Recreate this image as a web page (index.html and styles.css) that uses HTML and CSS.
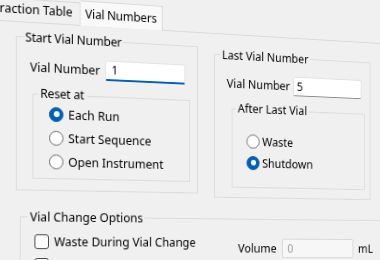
FILE: index.html
```html
<!DOCTYPE html>
<html lang="en">
<head>
    <meta charset="UTF-8">
    <meta name="viewport" content="width=device-width, initial-scale=1.0">
    <title>Vial Numbers</title>

    <link rel="stylesheet" href="styles.css">
</head>
<body>
  <div class="dialog">
    <div class="tabs">
      <div class="tab">Fraction Table</div>
      <div class="tab active">Vial Numbers</div>
    </div>

    <div class="panel">
      <div class="top-row">
        <fieldset class="group start">
          <legend>Start Vial Number</legend>
          <div class="field">
            <label>Vial Number</label>
            <input type="text" class="num focused" value="1" readonly>
          </div>
          <fieldset class="group reset">
            <legend>Reset at</legend>
            <div class="option"><span class="radio on"></span>Each Run</div>
            <div class="option"><span class="radio"></span>Start Sequence</div>
            <div class="option"><span class="radio"></span>Open Instrument</div>
          </fieldset>
        </fieldset>

        <fieldset class="group last">
          <legend>Last Vial Number</legend>
          <div class="field">
            <label>Vial Number</label>
            <input type="text" class="num" value="5" readonly>
          </div>
          <fieldset class="group after">
            <legend>After Last Vial</legend>
            <div class="option"><span class="radio"></span>Waste</div>
            <div class="option"><span class="radio on"></span>Shutdown</div>
          </fieldset>
        </fieldset>
      </div>

      <fieldset class="group change">
        <legend>Vial Change Options</legend>
        <div class="change-row">
          <div class="check-label"><span class="check"></span>Waste During Vial Change</div>
          <div class="volume">
            <label>Volume</label>
            <input type="text" class="num disabled" value="0" disabled>
            <span class="unit">mL</span>
          </div>
        </div>
        <div class="change-row">
          <div class="check-label"><span class="check"></span></div>
        </div>
      </fieldset>
    </div>
  </div>
</body>
</html>
```

FILE: styles.css
```css
html, body {
  margin: 0;
  width: 380px;
  height: 260px;
  overflow: hidden;
  background-color: #f0f0f0;
}

body {
  font-family: "Noto Sans", "Open Sans", sans-serif;
  font-size: 12.5px;
  color: #000;
}

/* the whole dialog is seen at an angle, right side further away */
.dialog {
  display: flex;
  flex-direction: column;
  width: 440px;
  height: 280px;
  transform-origin: 0 260px;
  transform: perspective(500px) rotateY(7.2deg);
}

.tabs {
  display: flex;
  align-items: flex-end;
  height: 26px;
  margin-top: -6px;
  margin-left: -14px;
}

.tab {
  box-sizing: border-box;
  height: 22px;
  margin-bottom: 1px;
  line-height: 20px;
  border: 1px solid #d9d9d9;
  border-bottom: none;
  background-color: #f0f0f0;
  padding: 0 7px 0 6px;
  white-space: nowrap;
}

.tab.active {
  position: relative;
  z-index: 1;
  width: 88px;
  height: 26px;
  margin-bottom: -1px;
  line-height: 26px;
  padding: 0;
  text-align: center;
  letter-spacing: -0.2px;
  border-left: none;
  background-color: #f9f9f9;
}

.panel {
  flex: 1;
  padding-left: 16px;
  border-top: 1px solid #d9d9d9;
}

.top-row {
  display: flex;
  align-items: flex-start;
}

.group {
  box-sizing: border-box;
  margin: 0;
  padding: 0;
  border: 1px solid #dcdcdc;
  min-width: 0;
}

.group legend {
  padding: 0 2px;
  line-height: 16px;
}

.start {
  width: 194px;
  margin-top: 6.5px;
  padding: 0 9px 11px 13.5px;
}

.start legend {
  margin-left: -7px;
  letter-spacing: -0.2px;
}

.reset {
  width: 168px;
  margin: 8.8px 0 0 2.5px;
  padding: 0 0 4.7px 16px;
}

.reset legend {
  margin-left: -11px;
}

.reset .option {
  height: 24px;
}

.reset .radio {
  margin-right: 5px;
}

.last {
  width: 184px;
  margin: 13.5px 0 0 18px;
  padding: 0 10px 10px 13.5px;
}

.last legend {
  margin-left: -7.6px;
}

.after {
  width: 157px;
  margin: 8.5px 0 0 5.5px;
  padding: 14.5px 0 14.5px 16px;
}

.after legend {
  margin-left: -12px;
}

.after .option {
  height: 23px;
}

.field {
  display: flex;
  align-items: center;
  height: 21px;
  margin-top: 11px;
}

.start .field label {
  width: 78px;
}

.last .field label {
  width: 76.5px;
}

.num {
  box-sizing: border-box;
  height: 21px;
  margin: 0;
  padding: 0 5px;
  font-family: inherit;
  font-size: 12.5px;
  color: #000;
  background-color: #fff;
  border: 1px solid #e2e2e2;
  border-bottom: 1px solid #8a8a8a;
  border-radius: 2px;
  outline: none;
}

.start .num {
  width: 87.5px;
  padding-left: 6px;
}

.num.focused {
  border-bottom: 2px solid #005fb8;
}

.last .num {
  width: 82.5px;
  padding-left: 4px;
}

.option {
  display: flex;
  align-items: center;
}

.radio {
  box-sizing: border-box;
  flex: none;
  display: flex;
  align-items: center;
  justify-content: center;
  width: 15px;
  height: 15px;
  margin-right: 3px;
  border: 1.5px solid #6a6a6a;
  border-radius: 50%;
  background-color: #fff;
}

.radio.on {
  border-color: #005fb8;
  background-color: #005fb8;
}

.radio.on::after {
  content: "";
  width: 6px;
  height: 6px;
  border-radius: 50%;
  background-color: #fff;
}

.change {
  width: 430px;
  margin: 14.6px 0 0 4.2px;
  padding: 0 0 0 14px;
}

.change legend {
  margin-left: -6.8px;
}

.change-row {
  display: flex;
  align-items: flex-start;
}

.change-row:first-of-type {
  margin-top: 7px;
}

.check-label {
  display: flex;
  align-items: center;
  width: 220px;
  height: 20px;
}

.check {
  box-sizing: border-box;
  flex: none;
  width: 15px;
  height: 15px;
  margin-right: 5px;
  border: 1.5px solid #4a4a4a;
  border-radius: 3px;
  background-color: #fbfbfb;
}

.change-row + .change-row .check-label {
  align-items: flex-start;
}

.volume {
  display: flex;
  align-items: center;
  height: 21px;
  margin-top: 5.5px;
}

.volume label {
  width: 51px;
}

.num.disabled {
  width: 84.5px;
  color: #9b9b9b;
  background-color: #f7f7f7;
  border: 1px solid #d7d7d7;
}

.unit {
  margin-left: 6px;
}
```
